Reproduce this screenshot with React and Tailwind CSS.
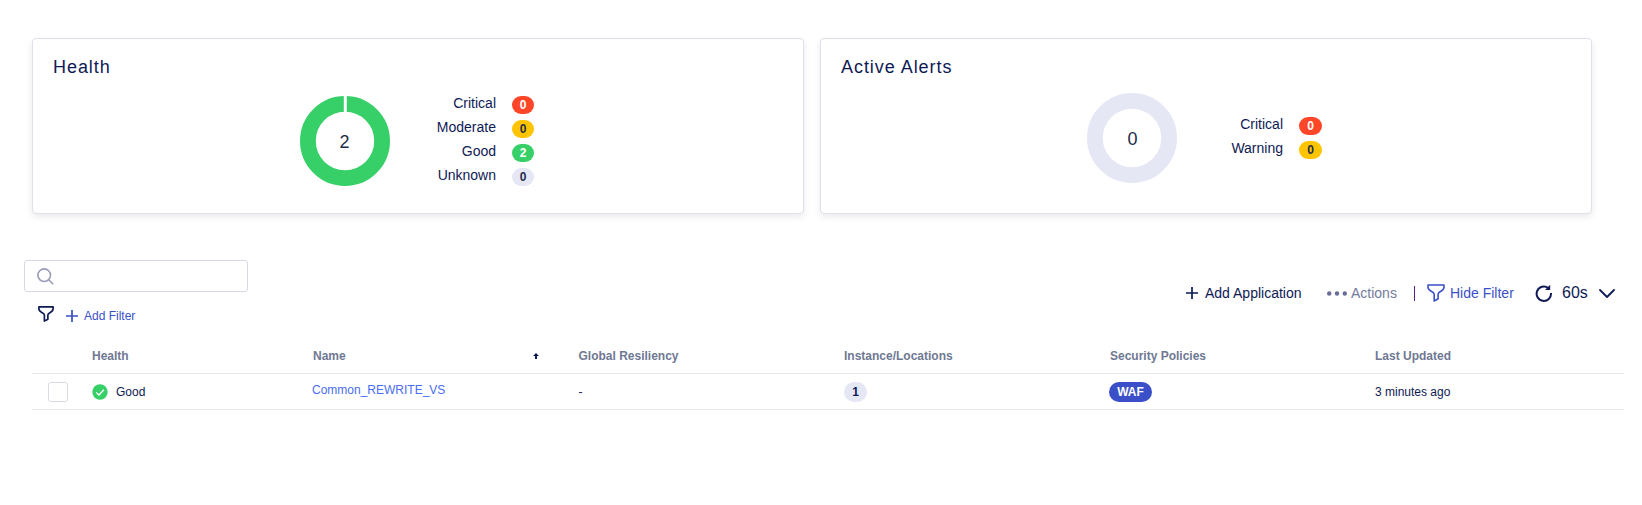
import React from "react";

function Badge({ tone, children, width }) {
  return (
    <span className={`flex h-[18px] ${width} items-center justify-center rounded-full text-xs leading-[18px] font-bold ${tone}`}>
      {children}
    </span>
  );
}

const RED = "bg-[#ff4628] text-white";
const YELLOW = "bg-[#ffc400] text-[#222c4a]";
const GREEN = "bg-[#37d068] text-white";
const GRAY = "bg-[#e5e8f4] text-[#222c4a]";

function Donut({ value, color, split, textX }) {
  return (
    <svg width="90" height="90" viewBox="0 0 90 90" className="shrink-0">
      <circle cx="45" cy="45" r="37.1" fill="none" stroke={color} strokeWidth="15.8" />
      {split && <path d="M45.3 0V17" stroke="#fff" strokeWidth="3" />}
      <text x={textX} y="52" textAnchor="middle" fontSize="18" fill="#222c4a">
        {value}
      </text>
    </svg>
  );
}

function Legend({ rows, badgeWidth }) {
  return (
    <div className="flex flex-col gap-1">
      {rows.map(([label, count, tone]) => (
        <div key={label} className="flex h-5 items-start gap-4">
          <span className="w-[61px] text-right text-sm leading-5 whitespace-nowrap">{label}</span>
          <div className="pt-[3px]">
            <Badge tone={tone} width={badgeWidth}>{count}</Badge>
          </div>
        </div>
      ))}
    </div>
  );
}

function Card({ title, children }) {
  return (
    <section className="flex h-44 w-[772px] flex-col rounded-[4px] border border-[#dfe0ea] bg-white px-5 pt-4 shadow-[0_3px_7px_rgba(20,30,80,0.09)]">
      <h2 className="text-lg leading-6 tracking-[0.95px]">{title}</h2>
      {children}
    </section>
  );
}

function Funnel({ size, color, width }) {
  return (
    <svg width={size} height={size} viewBox="0 0 18 18" fill="none" stroke={color} strokeWidth={width} strokeLinejoin="round" className="shrink-0">
      <path d="M1 1h16v2c0 2-1.500 3.300-3.200 4.200-1.500.8-2.700 1.500-2.700 3v4.600L7.200 17v-6.800c0-1.500-1.200-2.200-2.900-3C2.500 6.300 1 5 1 3z" />
    </svg>
  );
}

function Plus({ color, size }) {
  return (
    <svg width={size} height={size} viewBox="0 0 12 12" stroke={color} strokeWidth="1.7" className="shrink-0">
      <path d="M6 0v12M0 6h12" />
    </svg>
  );
}

const COLUMNS = "grid grid-cols-[60px_221px_265.500px_265.500px_266px_265px_249px]";

export default function App() {
  return (
    <main className="h-[505px] w-[1642px] overflow-hidden bg-white pt-[38px] font-['Liberation_Sans',Arial,sans-serif] text-[#0e1a55]">
      <div className="flex gap-4 pl-8">
        <Card title="Health">
          <div className="flex items-start pt-[17px] pl-[247px]">
            <Donut value="2" color="#37d068" split textX="44.6" />
            <div className="-mt-[3px] pl-[45px]">
              <Legend
                badgeWidth="w-[22px]"
                rows={[
                  ["Critical", 0, RED],
                  ["Moderate", 0, YELLOW],
                  ["Good", 2, GREEN],
                  ["Unknown", 0, GRAY],
                ]}
              />
            </div>
          </div>
        </Card>
        <Card title="Active Alerts">
          <div className="flex items-start pt-[14px] pl-[246px]">
            <Donut value="0" color="#e5e8f4" textX="45.4" />
            <div className="pt-[21px] pl-[45px]">
              <Legend
                badgeWidth="w-[23px]"
                rows={[
                  ["Critical", 0, RED],
                  ["Warning", 0, YELLOW],
                ]}
              />
            </div>
          </div>
        </Card>
      </div>

      <div className="flex items-start justify-between pt-[46px] pr-[27px] pl-6">
        <div>
          <label className="flex h-8 w-56 items-center rounded-[3px] border border-[#d6d8e4] pl-[11.500px]">
            <svg width="17" height="17" viewBox="0 0 17 17" fill="none" stroke="#9a9dba" strokeWidth="1.6">
              <circle cx="7.200" cy="7.200" r="6.300" />
              <path d="M11.700 11.700l4.500 4.500" />
            </svg>
          </label>
          <div className="mt-[14px] flex h-4 items-center pl-[14px]">
            <Funnel size={16} color="#0e1a55" width={1.9} />
            <div className="flex items-center pt-1 pl-3 text-[#3b50c8]">
              <Plus size={12} color="#3b50c8" />
              <span className="pl-1.5 text-xs leading-4 whitespace-nowrap">Add Filter</span>
            </div>
          </div>
        </div>
        <div className="mt-[21px] flex h-6 items-center text-sm whitespace-nowrap">
          <Plus size={12} color="#0e1a55" />
          <span className="w-[124px] pl-[7px] leading-6">Add Application</span>
          <svg width="20" height="5" viewBox="0 0 20 5" fill="#686d95" className="ml-[5px]">
            <circle cx="2.200" cy="2.500" r="2.200" />
            <circle cx="10" cy="2.500" r="2.200" />
            <circle cx="17.800" cy="2.500" r="2.200" />
          </svg>
          <span className="w-[67px] pl-1 leading-6 text-[#737a9b]">Actions</span>
          <span className="h-[15px] w-px bg-[#5b1d87]" />
          <span className="w-3" />
          <Funnel size={18} color="#3b50c8" width={1.6} />
          <span className="w-[90px] pl-[5px] leading-6 text-[#3b50c8]">Hide Filter</span>
          <svg width="18" height="18" viewBox="0 0 18 18" fill="none" stroke="#0e1a55" strokeWidth="2">
            <path d="M13.200 4A7.200 7.200 0 1 0 16 9" />
            <path d="M15.200.8v5.200H10z" fill="#0e1a55" stroke="none" />
          </svg>
          <span className="w-[46px] pl-[9px] text-base leading-6">60s</span>
          <svg width="16" height="9" viewBox="0 0 16 9" fill="none" stroke="#0e1a55" strokeWidth="1.800" strokeLinecap="round" strokeLinejoin="round">
            <path d="M1 1l7 7 7-7" />
          </svg>
        </div>
      </div>

      <div className="mt-[16px] ml-8 w-[1592px] text-xs">
        <div className={`${COLUMNS} h-[36px] items-center border-b border-[#e6e6ec] leading-4 font-bold text-[#6f7893]`}>
          <span />
          <span>Health</span>
          <span className="flex items-center justify-between pr-10">
            Name
            <svg width="6" height="6" viewBox="0 0 6 6" fill="#0e1a55">
              <path d="M3 0l3 3H4v3H2V3H0z" />
            </svg>
          </span>
          <span>Global Resiliency</span>
          <span>Instance/Locations</span>
          <span>Security Policies</span>
          <span>Last Updated</span>
        </div>
        <div className={`${COLUMNS} h-[36px] items-center border-b border-[#e6e6ec] leading-4`}>
          <span className="ml-4 size-5 rounded-[3px] border border-[#d8dae6]" />
          <span className="flex items-center gap-2">
            <svg width="16" height="16" viewBox="0 0 16 16">
              <circle cx="8" cy="8" r="7.700" fill="#37d068" />
              <path d="M4.200 8.400l2.700 2.600 5-5.300" fill="none" stroke="#fff" strokeWidth="1.300" />
            </svg>
            Good
          </span>
          <span className="-ml-px pb-1 text-[#4a6df5]">Common_REWRITE_VS</span>
          <span>-</span>
          <span className="flex h-5 w-[23px] items-center justify-center rounded-full bg-[#e5e8f4] font-bold">1</span>
          <span className="-ml-px flex h-5 w-[43px] items-center justify-center rounded-full bg-[#3b50c8] font-bold text-white">WAF</span>
          <span>3 minutes ago</span>
        </div>
      </div>
    </main>
  );
}
